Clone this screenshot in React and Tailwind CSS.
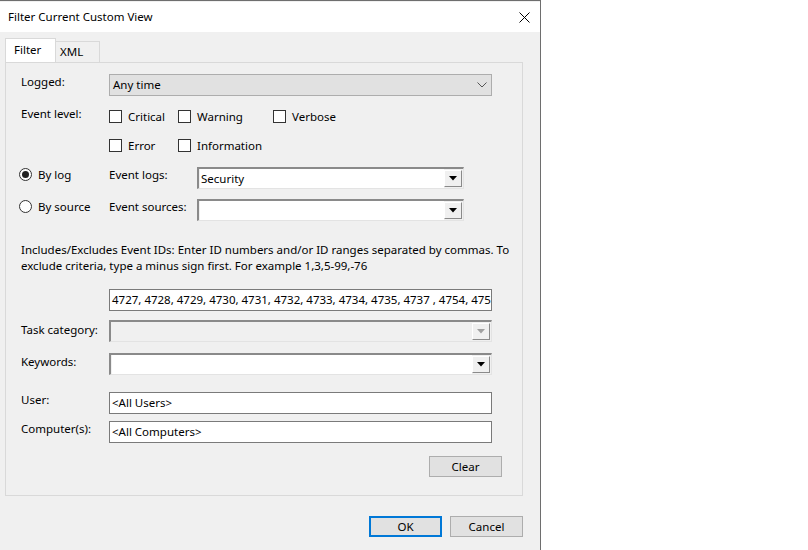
import React from 'react';

const font = { fontFamily: '"Noto Sans", "Open Sans", sans-serif' };

const Check = ({ label }) => (
    <div className="flex items-center gap-[6px] w-[69px]">
        <div className="w-[13px] h-[13px] bg-white border border-[#333] shrink-0" />
        <span>{label}</span>
    </div>
);

const Radio = ({ label, checked }) => (
    <div className="flex items-center gap-[6px]">
        <div className="w-[13px] h-[13px] rounded-full bg-white border border-[#333] flex items-center justify-center">
            {checked && <div className="w-[7px] h-[7px] rounded-full bg-[#222]" />}
        </div>
        <span>{label}</span>
    </div>
);

// classic sunken combo box with raised drop-down button
const SunkenCombo = ({ value, width, disabled }) => (
    <div
        className="h-[22px] border-t-2 border-l-2 border-t-[#8a8a8a] border-l-[#8a8a8a] border-b border-r border-b-[#e3e3e3] border-r-[#e3e3e3] flex items-center justify-between pl-[1px] pr-[1px]"
        style={{ width }}
    >
        <div className={`flex-1 h-full flex items-center ${disabled ? 'bg-[#f0f0f0]' : 'bg-white'}`}>
            <span className="pl-[1px]">{value}</span>
        </div>
        <div className="w-[18px] h-[17px] bg-[#f0f0f0] border border-t-white border-l-white border-b-[#8a8a8a] border-r-[#8a8a8a] flex items-center justify-center">
            <svg width="8" height="5" viewBox="0 0 8 5">
                <path d="M0 0 H8 L4 4.5 Z" fill={disabled ? '#a0a0a0' : '#000'} />
            </svg>
        </div>
    </div>
);

const Label = ({ children }) => <div className="w-[88px] shrink-0">{children}</div>;

const TextBox = ({ value }) => (
    <div className="w-[383px] h-[22px] bg-white border border-[#7a7a7a] flex items-center px-[2px] overflow-hidden whitespace-nowrap">
        {value}
    </div>
);

const Button = ({ children, primary }) => (
    <div
        className={`w-[73px] h-[21px] bg-[#e1e1e1] flex items-center justify-center ${
            primary ? 'border-2 border-[#0078d7]' : 'border border-[#adadad]'
        }`}
    >
        {children}
    </div>
);

export default function App() {
    return (
        <div className="w-[808px] h-[550px] bg-white overflow-hidden text-[11.5px] text-black leading-none" style={font}>
            <div className="w-[541px] h-[550px] border-t border-r border-[#6e6e6e] bg-[#f0f0f0] flex flex-col">
                {/* Title bar */}
                <div className="h-[30px] bg-white flex items-center justify-between pl-[8px] pr-[10px] mt-[1px]">
                    <span>Filter Current Custom View</span>
                    <svg width="11" height="11" viewBox="0 0 11 11">
                        <path d="M0.5 0.5 L10.5 10.5 M10.5 0.5 L0.5 10.5" stroke="#000" strokeWidth="1" />
                    </svg>
                </div>

                {/* Tabs */}
                <div className="flex items-end pl-[5px] mt-[6px] h-[24px]">
                    <div className="w-[51px] h-[24px] bg-white border border-b-0 border-[#d9d9d9] flex items-center pl-[8px] pb-[2px]">
                        Filter
                    </div>
                    <div className="w-[44px] h-[21px] bg-[#f0f0f0] border border-l-0 border-b-0 border-[#d9d9d9] flex items-center pl-[4px]">
                        XML
                    </div>
                </div>

                {/* Tab page */}
                <div className="ml-[5px] w-[518px] h-[434px] border border-[#d9d9d9] flex flex-col pl-[15px] pt-[11px]">
                    <div className="flex h-[22px]">
                        <Label><div className="pt-[2px]">Logged:</div></Label>
                        <div className="w-[383px] h-[22px] bg-[#e1e1e1] border border-[#adadad] flex items-center justify-between pl-[3px] pr-[4px]">
                            <span>Any time</span>
                            <svg width="10" height="6" viewBox="0 0 10 6">
                                <path d="M0.5 0.5 L5 5 L9.5 0.5" stroke="#555" strokeWidth="1" fill="none" />
                            </svg>
                        </div>
                    </div>

                    <div className="flex mt-[13px]">
                        <Label><div className="-mt-[1px]">Event level:</div></Label>
                        <div className="flex flex-col gap-[16px] pt-[1px]">
                            <div className="flex">
                                <Check label="Critical" />
                                <div className="w-[95px]"><Check label="Warning" /></div>
                                <Check label="Verbose" />
                            </div>
                            <div className="flex">
                                <Check label="Error" />
                                <div className="w-[95px]"><div className="w-[120px]"><Check label="Information" /></div></div>
                            </div>
                        </div>
                    </div>

                    <div className="flex mt-[15px] h-[22px]">
                        <div className="w-[88px] -ml-[2px] pt-[1px]"><Radio label="By log" checked /></div>
                        <div className="w-[88px] pt-[2px] ml-[2px]">Event logs:</div>
                        <SunkenCombo value="Security" width={267} />
                    </div>

                    <div className="flex mt-[10px] h-[22px]">
                        <div className="w-[88px] -ml-[2px] pt-[1px]"><Radio label="By source" /></div>
                        <div className="w-[88px] pt-[2px] ml-[2px]">Event sources:</div>
                        <SunkenCombo value="" width={267} />
                    </div>

                    <div className="mt-[21px] leading-[16px] whitespace-nowrap">
                        Includes/Excludes Event IDs: Enter ID numbers and/or ID ranges separated by commas. To
                        <br />
                        exclude criteria, type a minus sign first. For example 1,3,5-99,-76
                    </div>

                    <div className="flex mt-[15px]">
                        <Label />
                        <TextBox value="4727, 4728, 4729, 4730, 4731, 4732, 4733, 4734, 4735, 4737 , 4754, 4755, 4756, 4757, 4758" />
                    </div>

                    <div className="flex mt-[9px] h-[22px]">
                        <Label><div className="pt-[4px]">Task category:</div></Label>
                        <SunkenCombo value="" width={383} disabled />
                    </div>

                    <div className="flex mt-[11px] h-[22px]">
                        <Label><div className="pt-[3px]">Keywords:</div></Label>
                        <SunkenCombo value="" width={383} />
                    </div>

                    <div className="flex mt-[17px]">
                        <Label><div className="pt-[2px]">User:</div></Label>
                        <TextBox value="<All Users>" />
                    </div>

                    <div className="flex mt-[7px]">
                        <Label><div className="pt-[2px]">Computer(s):</div></Label>
                        <TextBox value="<All Computers>" />
                    </div>

                    <div className="flex justify-end mt-[13px] pr-[20px]">
                        <Button>Clear</Button>
                    </div>
                </div>

                {/* Dialog buttons */}
                <div className="flex justify-end gap-[8px] mt-[20px] pr-[17px]">
                    <Button primary>OK</Button>
                    <Button>Cancel</Button>
                </div>
            </div>
        </div>
    );
}
